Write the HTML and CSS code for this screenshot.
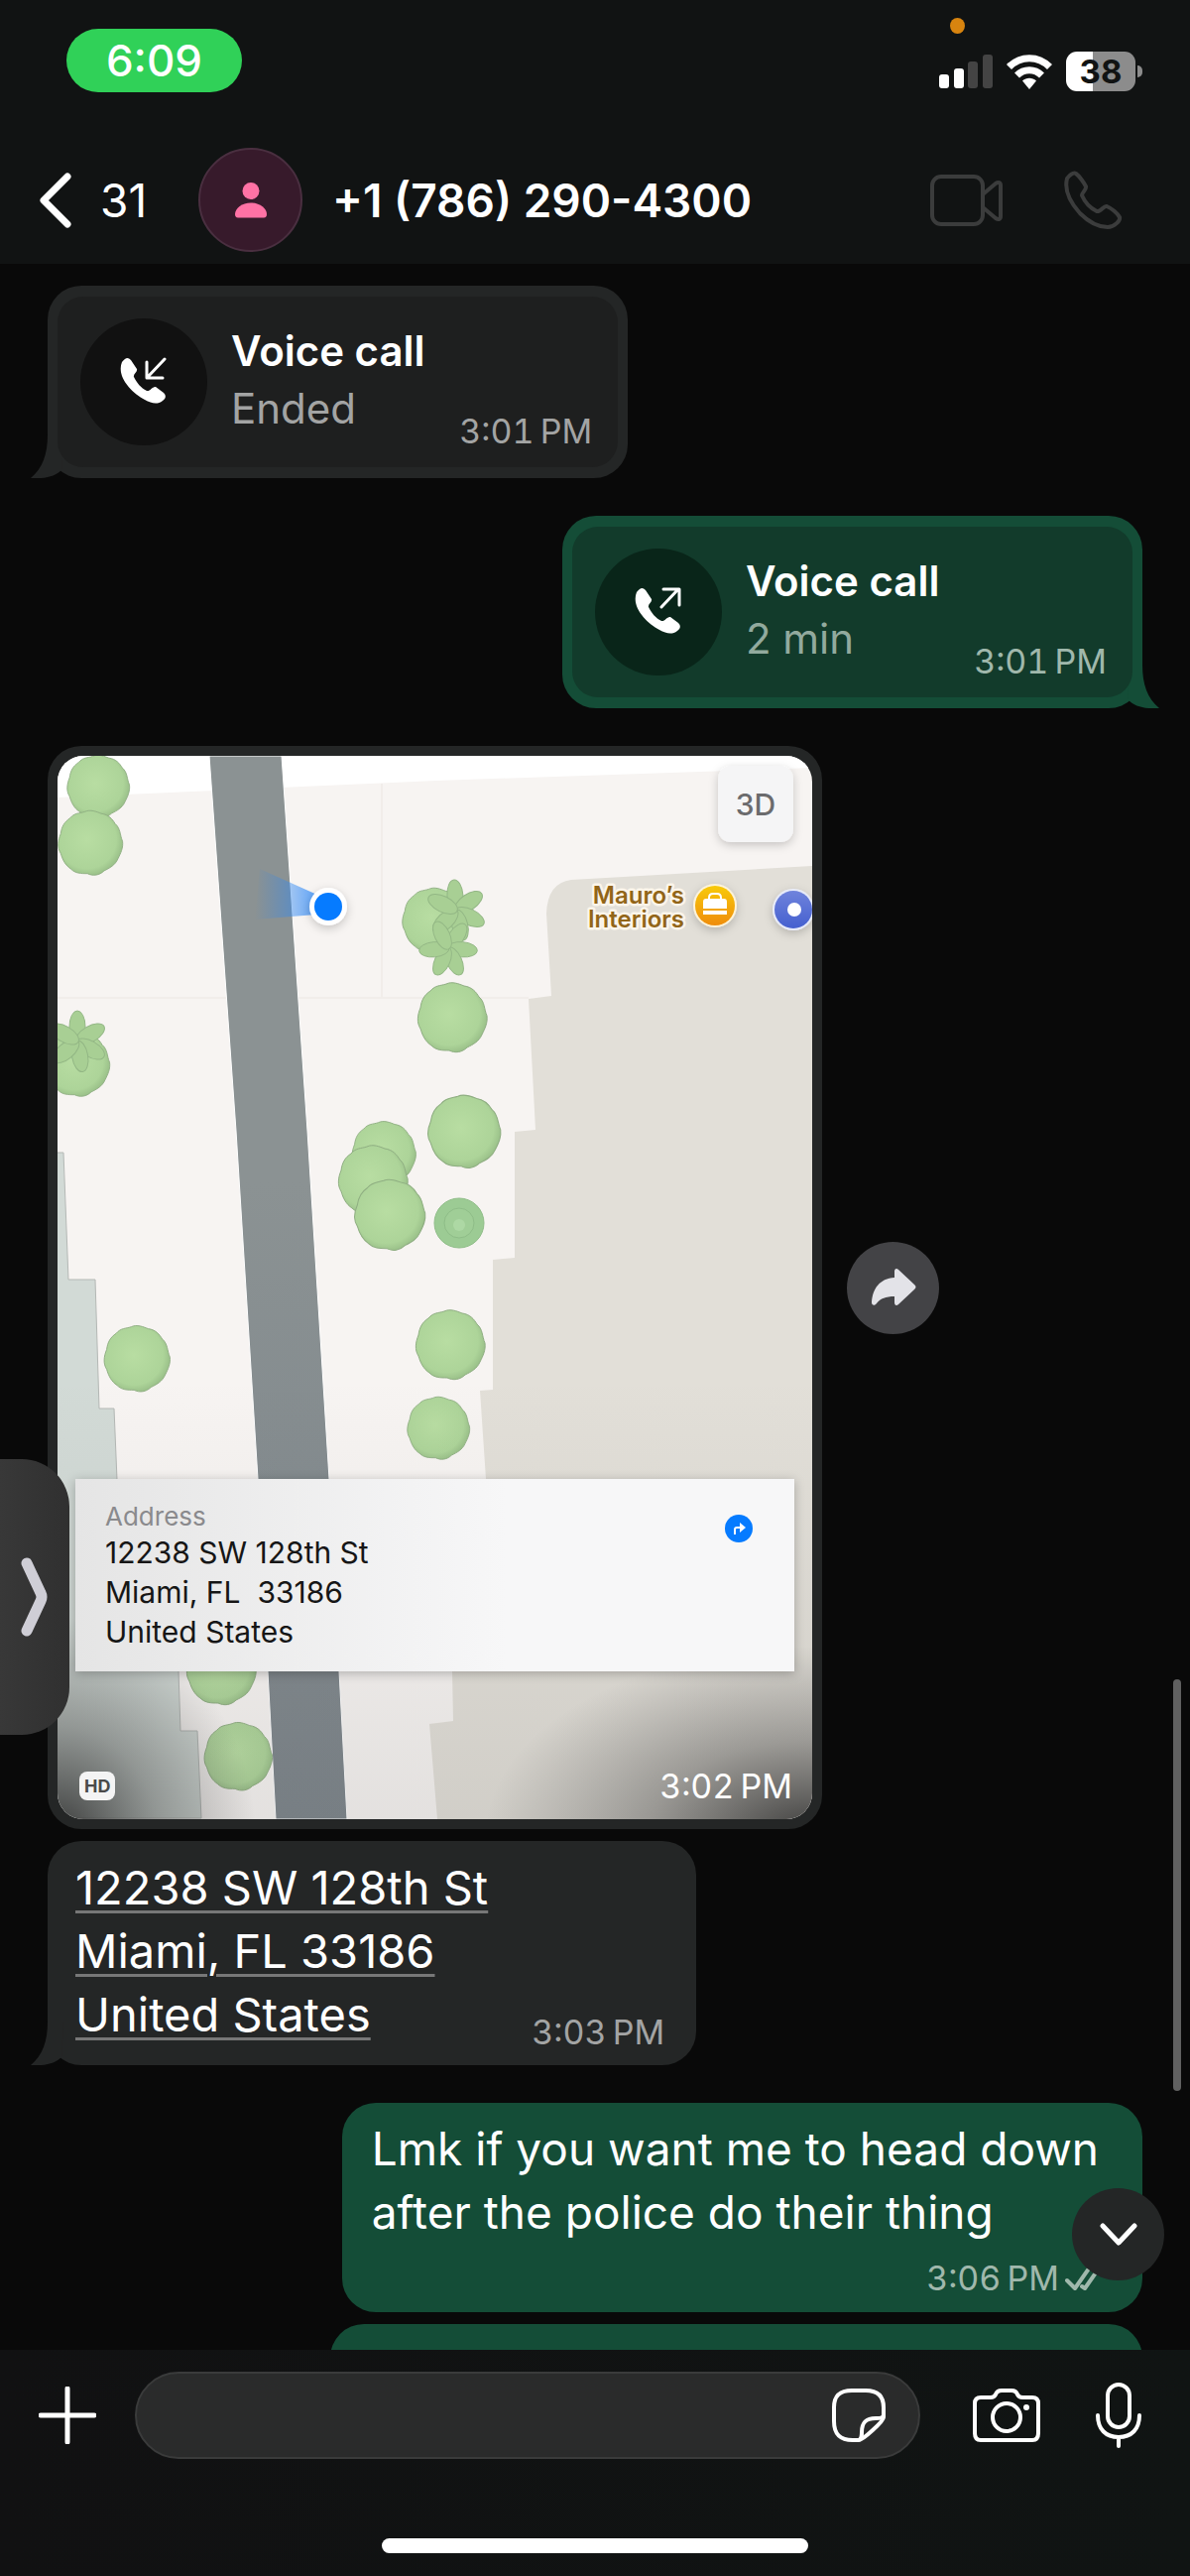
FILE: index.html
```html
<!doctype html>
<html lang="en">

<head>
  <meta charset="utf-8">
  <meta name="viewport" content="width=device-width, initial-scale=1">
  <title>+1 (786) 290-4300</title>
  <link rel="stylesheet" href="styles.css">
</head>

<body>
  <div class="screen">
    <header class="header">
      <div class="status">
        <span class="clock">6:09</span>
        <div class="status-icons">
          <span class="mic-dot"></span>
          <svg width="54" height="34" viewBox="0 0 54 34">
            <rect x="0" y="20" width="10" height="14" rx="3" fill="#fff"/>
            <rect x="15" y="14" width="10" height="20" rx="3" fill="#fff"/>
            <rect x="29" y="7" width="10" height="27" rx="3" fill="#444"/>
            <rect x="44" y="0" width="10" height="34" rx="3" fill="#444"/>
          </svg>
          <svg width="46" height="35" viewBox="0 0 46 35">
            <g fill="none" stroke="#fff" stroke-width="7">
              <path d="M2.5 12.5C14 0.7 32 .7 43.500 12.500"/>
              <path d="M10.500 21C17.500 14 28.500 14 35.500 21"/>
            </g>
            <path d="M23 35l-7-8.500c4-3.600 10-3.600 14 0z" fill="#fff"/>
          </svg>
          <div class="battery"><span class="battery-level">38</span></div>
        </div>
      </div>
      <div class="contact">
        <a class="back" href="#">
          <svg width="34" height="56" viewBox="0 0 34 56"><path d="M29 4L5 28l24 24" fill="none" stroke="#fff" stroke-width="7" stroke-linecap="round" stroke-linejoin="round"/></svg>
          <span>31</span>
        </a>
        <span class="avatar">
          <svg width="34" height="36" viewBox="0 0 34 36" fill="#ff72a5"><circle cx="17" cy="8.500" r="8.500"/><path d="M1 32C1 26 8 20.500 17 20.500S33 26 33 32c0 2-1 3.500-3 3.500H4c-2 0-3-1.500-3-3.500z"/></svg>
        </span>
        <h1>+1 (786) 290-4300</h1>
        <div class="actions">
          <button type="button" aria-label="Video call">
            <svg width="74" height="52" viewBox="0 0 74 52" fill="none" stroke="#3b3c3c" stroke-width="4" stroke-linejoin="round"><rect x="2" y="2" width="51" height="48" rx="9"/><path d="M53 20L66 9c3-2 5-1 5 2v31c0 3-2 4-5 2L53 33z"/></svg>
          </button>
          <button type="button" aria-label="Voice call">
            <svg width="60" height="60" viewBox="0 0 60 60"><path d="M4 8C8 3 11 2 13 3c3 2 8 9 10 13 1 3-4 6-4 9 3 7 9 13 15 16 4 1 7-6 10-5 5 2 11 7 13 11 1 3-5 10-12 10-9 0-19-5-28-14C8 33 1 20 4 8z" fill="none" stroke="#3b3c3c" stroke-width="4" stroke-linejoin="round"/></svg>
          </button>
        </div>
      </div>
    </header>

    <main class="chat">
      <article class="bubble call in tail">
        <div class="call-card">
          <span class="call-icon">
            <svg width="50" height="50" viewBox="0 0 50 50">
              <path d="M3 5C7 0 9 0 12 3l6 9c1 3-4 5-3 8 3 6 7 11 13 14 3 1 6-5 9-4l8 6c3 3 2 6-1 8-5 4-11 3-18-1C13 36-3 20 3 5z" fill="#fff"/>
              <path d="M46 2L29 20M28 5v16h16" fill="none" stroke="#fff" stroke-width="3" stroke-linecap="round" stroke-linejoin="round"/>
            </svg>
          </span>
          <div class="call-text"><strong>Voice call</strong><span>Ended</span></div>
          <time>3:01&#8201;PM</time>
        </div>
        <svg class="tail-shape" width="34" height="44" viewBox="0 0 34 44"><path d="M18 0c0 20-5 34-17 44 15 1 25-2 31-8l2-36z"/></svg>
      </article>

      <article class="bubble call out tail">
        <div class="call-card">
          <span class="call-icon">
            <svg width="50" height="50" viewBox="0 0 50 50">
              <path d="M3 5C7 0 9 0 12 3l6 9c1 3-4 5-3 8 3 6 7 11 13 14 3 1 6-5 9-4l8 6c3 3 2 6-1 8-5 4-11 3-18-1C13 36-3 20 3 5z" fill="#fff"/>
              <path d="M28 20L45 2M30 2h16v16" fill="none" stroke="#fff" stroke-width="3" stroke-linecap="round" stroke-linejoin="round"/>
            </svg>
          </span>
          <div class="call-text"><strong>Voice call</strong><span>2 min</span></div>
          <time>3:01&#8201;PM</time>
        </div>
        <svg class="tail-shape" width="34" height="44" viewBox="0 0 34 44"><path d="M18 0c0 20-5 34-17 44 15 1 25-2 31-8l2-36z"/></svg>
      </article>

      <div class="group">
        <div class="photo-row">
          <article class="bubble in photo">
            <div class="map">
              <svg class="map-art" viewBox="58 762 761 1072">
                <defs>
                  <radialGradient id="leaf" cx=".45" cy=".45" r=".6">
                    <stop offset="0" stop-color="#b8dda2"/>
                    <stop offset=".75" stop-color="#add499"/>
                    <stop offset="1" stop-color="#93b983"/>
                  </radialGradient>
                  <linearGradient id="road" x1="0" y1="0" x2="0" y2="1"><stop offset=".4" stop-color="#8b9293"/><stop offset="1" stop-color="#7c848a"/></linearGradient>
                  <linearGradient id="beam"><stop offset="0" stop-color="#2f84e6" stop-opacity="0"/><stop offset="1" stop-color="#2f8cff" stop-opacity=".9"/></linearGradient>
                  <linearGradient id="gold" x1="0" y1="0" x2="0" y2="1"><stop offset="0" stop-color="#f8ca0a"/><stop offset="1" stop-color="#ef8d0c"/></linearGradient>
                  <linearGradient id="indigo" x1="0" y1="0" x2="0" y2="1"><stop offset="0" stop-color="#6f83dc"/><stop offset="1" stop-color="#4560cf"/></linearGradient>
                  <linearGradient id="shade" x1="0" y1="0" x2="0" y2="1"><stop offset="0" stop-color="#555" stop-opacity="0"/><stop offset="1" stop-color="#555" stop-opacity=".12"/></linearGradient>
                  <radialGradient id="corner"><stop offset="0" stop-color="#222" stop-opacity=".85"/><stop offset=".5" stop-color="#333" stop-opacity=".35"/><stop offset="1" stop-color="#444" stop-opacity="0"/></radialGradient>
                  <filter id="soft" x="-50%" y="-50%" width="200%" height="200%"><feDropShadow dx="0" dy="3" stdDeviation="5" flood-opacity=".2"/></filter>
                  <path id="tree" fill="url(#leaf)" stroke="#8fae82" stroke-width="1" d="M-6-34C0-37 7-34 12-32 20-31 24-26 27-21 33-16 32-9 35-2 36 5 33 11 30 17 27 24 21 27 15 30 10 35 3 36-3 33-10 33-16 33-21 28-27 24-30 18-32 11-36 5-35-3-32-10-31-18-28-23-22-27-17-33-12-32-6-34z"/>
                  <g id="palm" fill="#a8cf94" stroke="#93b785" stroke-width="1">
                    <ellipse cy="-15" rx="8" ry="16"/><ellipse cy="-15" rx="8" ry="16" transform="rotate(60)"/><ellipse cy="-15" rx="8" ry="16" transform="rotate(120)"/><ellipse cy="-15" rx="8" ry="16" transform="rotate(170)"/><ellipse cy="-15" rx="8" ry="16" transform="rotate(230)"/><ellipse cy="-15" rx="8" ry="16" transform="rotate(300)"/>
                  </g>
                </defs>
                <path d="M58 762h761v1072H58z" fill="#f7f4f2"/>
                <path d="M58 762h761v12L440 787 58 804z" fill="#fff"/>
                <path d="M385 790v216M58 1006h475" fill="none" stroke="#f1edea" stroke-width="2"/>
                <path d="M819 873L576 887q-24 3-25 34l5 83-23 3 7 132-21 2v127l-22 2v131l-13 1 6 89v194l-34 0 1 50-24 3 8 96h380z" fill="#e2dfd8"/>
                <path d="M54 1162h10l5 128h27l4 130h15l3 72 62 193 2 60h17l4 88H54z" fill="#d2dad6" stroke="#b4b8b5" stroke-width="1"/>
                <path d="M211 762h73l26 378 22 351 10 194 8 149h-72l-8-149-10-194-22-351z" fill="url(#road)" stroke="#fff" stroke-width="1"/>

                <use href="#tree" transform="translate(99 793) scale(.9)"/>
                <use href="#tree" transform="translate(91 850) scale(.93)"/>
                <use href="#tree" transform="translate(78 1073) scale(.93)"/>
                <use href="#palm" transform="translate(78 1050)"/>
                <use href="#tree" transform="translate(438 928) scale(.93)"/>
                <use href="#palm" transform="translate(460 918) rotate(-4)"/>
                <use href="#palm" transform="translate(452 956) scale(.95) rotate(35)"/>
                <use href="#tree" transform="translate(456 1026)"/>
                <use href="#tree" transform="translate(468 1141) scale(1.050)"/>
                <use href="#tree" transform="translate(387 1163) scale(.92)"/>
                <use href="#tree" transform="translate(376 1190)"/>
                <use href="#tree" transform="translate(393 1225) scale(1.020)"/>
                <g fill="#9ccb94" stroke="#8fbd88" stroke-width="1"><circle cx="463" cy="1233" r="25"/><circle cx="463" cy="1233" r="15" fill="#a0ce97"/><circle cx="463" cy="1235" r="6" fill="#add8a4" stroke="none"/></g>
                <use href="#tree" transform="translate(454 1356)"/>
                <use href="#tree" transform="translate(442 1440) scale(.9)"/>
                <use href="#tree" transform="translate(138 1370) scale(.95)"/>
                <use href="#tree" transform="translate(223 1684)"/>
                <use href="#tree" transform="translate(240 1771) scale(.98)"/>

                <path d="M262 876l69 31v14l-74 6z" fill="url(#beam)"/>
                <circle cx="331" cy="914" r="19" fill="#fff" filter="url(#soft)"/>
                <circle cx="331" cy="914" r="14" fill="#067bff"/>

                <rect x="724" y="772" width="76" height="77" rx="13" fill="#f5f5f6" filter="url(#soft)"/>
                <text class="map-3d" x="762" y="822">3D</text>
                <text class="map-label" x="690" y="911">Mauro’s</text>
                <text class="map-label" x="690" y="935">Interiors</text>
                <circle cx="721" cy="913" r="22" fill="#fdf3d9" filter="url(#soft)"/>
                <circle cx="721" cy="913" r="20" fill="url(#gold)"/>
                <path d="M715 907v-2q0-4 4-4h4q4 0 4 4v2" fill="none" stroke="#fff" stroke-width="2"/>
                <path d="M712 906h18q3 0 3 3v7h-24v-7q0-3 3-3zM709 918h24v4h-24z" fill="#fff"/>
                <circle cx="800" cy="917" r="21" fill="#e8ecfa" filter="url(#soft)"/>
                <circle cx="800" cy="917" r="19" fill="url(#indigo)"/>
                <circle cx="801" cy="917" r="7" fill="#fff"/>

                <path d="M58 1390h761v444H58z" fill="url(#shade)"/>
                <ellipse cx="58" cy="1850" rx="200" ry="220" fill="url(#corner)"/>
                <ellipse cx="819" cy="1850" rx="330" ry="190" fill="url(#corner)"/>
              </svg>
              <div class="address">
                <div>
                  <small>Address</small>
                  <p>12238 SW 128th St<br>Miami, FL &nbsp;33186<br>United States</p>
                </div>
                <svg width="28" height="28" viewBox="0 0 28 28"><circle cx="14" cy="14" r="14" fill="#067bff"/><path d="M9 20v-5q0-3 3-3h3V8l6 5-6 5v-4h-3q-1 0-1 1v5z" fill="#fff"/></svg>
              </div>
              <div class="photo-meta"><span class="hd">HD</span><time>3:02&#8201;PM</time></div>
            </div>
          </article>
          <button type="button" class="forward" aria-label="Forward">
            <svg width="46" height="40" viewBox="0 0 46 40"><path d="M24 10V4c0-3 2-4 4-2l16 15c2 2 2 3 0 5L28 37c-2 2-4 1-4-2v-6c-9 0-14 2-18 7-2 3-5 2-5-1C2 21 9 11 24 10z" fill="#e3e3e8"/></svg>
          </button>
        </div>

        <article class="bubble in tail text-time">
          <a href="#">12238 SW 128th St<br>Miami, FL 33186<br>United States</a>
          <time>3:03&#8201;PM</time>
          <svg class="tail-shape" width="34" height="44" viewBox="0 0 34 44"><path d="M18 0c0 20-5 34-17 44 15 1 25-2 31-8l2-36z"/></svg>
        </article>
      </div>

      <div class="group">
        <article class="bubble out text">
          <p>Lmk if you want me to head down<br>after the police do their thing</p>
          <div class="sent">
            <time>3:06&#8201;PM</time>
            <svg width="34" height="26" viewBox="0 0 34 26" fill="none" stroke="#a0b8ac" stroke-width="4" stroke-linecap="round" stroke-linejoin="round"><path d="M2 15l8 8L24 3M17 21l3 2L34 3"/></svg>
          </div>
        </article>
        <article class="bubble out next"></article>
      </div>

      <button type="button" class="drawer" aria-label="Show apps">
        <svg width="28" height="80" viewBox="0 0 28 80"><path d="M6 6l14 30q2 4 0 8L6 74" fill="none" stroke="#cfced6" stroke-width="11" stroke-linecap="round" stroke-linejoin="round"/></svg>
      </button>
      <button type="button" class="to-bottom" aria-label="Scroll to bottom">
        <svg width="38" height="24" viewBox="0 0 38 24"><path d="M3 3l16 17L35 3" fill="none" stroke="#fff" stroke-width="5" stroke-linecap="round" stroke-linejoin="round"/></svg>
      </button>
      <span class="scrollbar"></span>
    </main>

    <footer class="footer">
      <form class="composer">
        <button type="button" aria-label="Attach">
          <svg width="58" height="58" viewBox="0 0 58 58"><path d="M29 2v54M2 29h54" stroke="#fff" stroke-width="5" stroke-linecap="round"/></svg>
        </button>
        <div class="field">
          <input type="text" aria-label="Message">
          <button type="button" aria-label="Stickers">
            <svg width="54" height="54" viewBox="0 0 54 54" fill="none" stroke="#fff" stroke-width="4" stroke-linejoin="round"><path d="M27 52h-6C8 52 2 46 2 33V19C2 7 8 2 20 2h14c12 0 18 6 18 17v10c0 4-21 23-25 23z"/><path d="M27 52c3-1 3-4 3-8 0-10 4-14 14-14 5 0 7 0 8-3"/></svg>
          </button>
        </div>
        <button type="button" aria-label="Camera">
          <svg width="68" height="54" viewBox="0 0 68 54" fill="none" stroke="#fff" stroke-width="4" stroke-linejoin="round"><path d="M8 9h10c3 0 4-1 5-3 1-3 3-4 6-4h10c3 0 5 1 6 4 1 2 2 3 5 3h10c4 0 6 2 6 6v30c0 5-2 7-6 7H8c-4 0-6-2-6-7V15c0-4 2-6 6-6z"/><circle cx="34" cy="29" r="14"/><circle cx="54" cy="19" r="3" fill="#fff" stroke="none"/></svg>
        </button>
        <button type="button" aria-label="Record voice message">
          <svg width="46" height="66" viewBox="0 0 46 66" fill="none" stroke="#fff" stroke-width="4" stroke-linecap="round"><rect x="12" y="2" width="22" height="43" rx="11"/><path d="M2 33c0 14 8 22 21 22s21-8 21-22M23 55v9"/></svg>
        </button>
      </form>
      <span class="home-bar"></span>
    </footer>
  </div>
</body>

</html>
```
FILE: styles.css
```css
* {
  box-sizing: border-box;
}

body {
  margin: 0;
  background-color: #090909;
  color: #fff;
  font-family: Inter, "Liberation Sans", sans-serif;
}

h1,
p {
  margin: 0;
  font-weight: 400;
}

svg {
  display: block;
}

button {
  display: flex;
  align-items: center;
  justify-content: center;
  padding: 0;
  border: none;
  background: none;
  color: inherit;
  cursor: pointer;
}

a {
  color: inherit;
}

time {
  color: #a3a4a4;
  font-size: 34px;
  font-variant-numeric: tabular-nums;
  line-height: 28px;
  white-space: nowrap;
}

.screen {
  display: flex;
  flex-direction: column;
  height: 100vh;
}

/* Status bar and contact */
.header {
  flex: none;
  padding: 29px 48px 12px 39px;
  background-color: #111313;
}

.status {
  display: flex;
  justify-content: space-between;
  align-items: flex-start;
  padding-left: 28px;
}

.clock {
  width: 177px;
  border-radius: 32px;
  background-color: #30d158;
  font-size: 44px;
  font-weight: 500;
  line-height: 64px;
  text-align: center;
}

.status-icons {
  position: relative;
  display: flex;
  align-items: center;
  gap: 14px;
  padding-top: 23px;
}

.mic-dot {
  position: absolute;
  top: -11px;
  left: 11px;
  width: 15px;
  height: 16px;
  border-radius: 50%;
  background-color: #d8840f;
}

.battery {
  position: relative;
  width: 70px;
  margin-right: 7px;
  border-radius: 11px;
  background: linear-gradient(90deg, #fff 38%, #8c8c8c 38%);
  color: #111313;
  text-align: center;
}

.battery::after {
  content: "";
  position: absolute;
  top: 14px;
  right: -7px;
  width: 5px;
  height: 12px;
  border-radius: 0 5px 5px 0;
  background-color: #8c8c8c;
}

.battery-level {
  display: block;
  font-size: 33px;
  font-weight: 700;
  line-height: 40px;
}

.contact {
  display: flex;
  align-items: center;
  margin-top: 56px;
}

.back {
  display: flex;
  align-items: center;
  gap: 28px;
  width: 161px;
  font-size: 46px;
  text-decoration: none;
}

.avatar {
  display: flex;
  align-items: center;
  justify-content: center;
  width: 105px;
  height: 105px;
  border: 2px solid #4a2f40;
  border-radius: 50%;
  background-color: #371a2b;
}

h1 {
  flex: 1;
  margin-left: 30px;
  font-size: 46px;
  font-weight: 600;
}

.actions {
  display: flex;
  align-items: center;
  gap: 60px;
  padding-right: 20px;
}

/* Messages */
.chat {
  position: relative;
  flex: 1;
  min-height: 0;
  overflow: hidden;
  display: flex;
  flex-direction: column;
  gap: 38px;
  padding: 22px 48px 0;
}

.group {
  display: flex;
  flex-direction: column;
  gap: 12px;
}

.bubble {
  position: relative;
  flex: none;
  border-radius: 34px;
  font-size: 47px;
  line-height: 64px;
}

.in {
  align-self: flex-start;
  background-color: #242626;
}

.out {
  align-self: flex-end;
  background-color: #144d37;
}

.out time {
  color: #a0b8ac;
}

.tail-shape {
  position: absolute;
  bottom: 0;
  left: -18px;
  fill: #242626;
}

.out .tail-shape {
  right: -18px;
  left: auto;
  fill: #144d37;
  transform: scaleX(-1);
}

.call {
  width: 53%;
  padding: 11px 10px;
}

.call-card {
  position: relative;
  z-index: 1;
  display: flex;
  align-items: center;
  padding: 22px 26px 22px 23px;
  border-radius: 26px;
  background-color: #1e1f1f;
}

.out .call-card {
  background-color: #123b2b;
}

.call-icon {
  display: flex;
  align-items: center;
  justify-content: center;
  width: 128px;
  height: 128px;
  border-radius: 50%;
  background-color: #111;
}

.out .call-icon {
  background-color: #092519;
}

.call-text {
  display: flex;
  flex-direction: column;
  margin-left: 24px;
  padding-bottom: 4px;
  font-size: 42px;
  line-height: 58px;
}

.call-text strong {
  font-weight: 600;
}

.call-text span {
  color: #a3a4a4;
}

.out .call-text span {
  color: #92aa9e;
}

.call time {
  align-self: flex-end;
  margin-left: auto;
}

/* Map picture */
.photo-row {
  display: flex;
  align-items: center;
  gap: 25px;
}

.photo {
  width: 781px;
  padding: 10px;
}

.map {
  position: relative;
  overflow: hidden;
  border-radius: 26px;
}

.map-art {
  width: 100%;
  height: auto;
}

.map-3d {
  fill: #6b6b6d;
  font-size: 30px;
  font-weight: 500;
  text-anchor: middle;
}

.map-label {
  fill: #926518;
  stroke: #fbf5ea;
  stroke-width: 5px;
  stroke-linejoin: round;
  paint-order: stroke;
  font-size: 24px;
  font-weight: 600;
  text-anchor: end;
}

.address {
  position: absolute;
  top: 729px;
  left: 18px;
  right: 18px;
  display: flex;
  justify-content: space-between;
  padding: 22px 42px 20px 30px;
  background: linear-gradient(90deg, #e5e5e5, #f7f7f8 60%);
  box-shadow: 0 2px 10px rgba(0, 0, 0, 0.25);
  color: #161616;
  font-size: 30px;
  line-height: 40px;
}

.address small {
  display: block;
  color: #8a8a8d;
  font-size: 26px;
  line-height: 32px;
}

.address svg {
  margin-top: 14px;
}

.photo-meta {
  position: absolute;
  right: 20px;
  bottom: 19px;
  left: 22px;
  display: flex;
  align-items: center;
  justify-content: space-between;
}

.photo-meta time {
  color: #fff;
}

.hd {
  padding: 0 5px;
  border-radius: 8px;
  background-color: #f4f4f4;
  color: #4a4a4a;
  font-size: 18px;
  font-weight: 700;
  line-height: 29px;
}

.forward {
  width: 93px;
  height: 93px;
  border-radius: 50%;
  background-color: #434346;
}

/* Text messages */
.text-time {
  display: flex;
  align-items: flex-end;
  gap: 44px;
  padding: 15px 32px 19px 28px;
}

.text-time a {
  text-decoration-color: #777;
  text-decoration-thickness: 3px;
  text-underline-offset: 6px;
}

.text {
  padding: 14px 44px 0 30px;
  font-size: 46px;
}

.sent {
  display: flex;
  align-items: center;
  justify-content: flex-end;
  gap: 6px;
  height: 69px;
}

.next {
  width: 819px;
  height: 120px;
}

/* Controls over the chat */
.drawer {
  position: absolute;
  top: 1205px;
  left: 0;
  width: 70px;
  height: 278px;
  border-radius: 0 48px 48px 0;
  background: linear-gradient(90deg, #383838, #303030);
}

.to-bottom {
  position: absolute;
  right: 26px;
  bottom: 70px;
  width: 93px;
  height: 93px;
  border-radius: 50%;
  background-color: #242626;
}

.scrollbar {
  position: absolute;
  right: 9px;
  bottom: 261px;
  width: 8px;
  height: 415px;
  border-radius: 4px;
  background-color: #606060;
}

/* Composer */
.footer {
  flex: none;
  display: flex;
  flex-direction: column;
  align-items: center;
  padding: 22px 0 23px;
  background: linear-gradient(90deg, #111112, #101413);
}

.composer {
  display: flex;
  align-items: center;
  align-self: stretch;
  padding: 0 49px 0 39px;
}

.field {
  flex: 1;
  min-width: 0;
  display: flex;
  align-items: center;
  height: 88px;
  margin: 0 53px 0 39px;
  padding: 0 33px 0 40px;
  border: 2px solid #3a3b3b;
  border-radius: 44px;
  background-color: #2a2b2b;
}

.field input {
  flex: 1;
  min-width: 0;
  border: none;
  outline: none;
  background: none;
  color: #fff;
  font: inherit;
  font-size: 44px;
}

.composer > button:last-child {
  margin-left: 56px;
}

.home-bar {
  width: 430px;
  height: 15px;
  margin-top: 80px;
  border-radius: 8px;
  background-color: #fff;
}
```
